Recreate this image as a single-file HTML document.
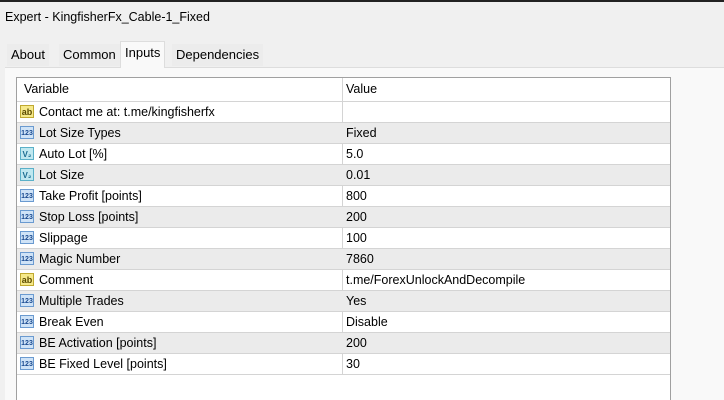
<!DOCTYPE html><html style="overflow:hidden"><head><style>
html,body{overflow:hidden}
body{margin:0;width:724px;height:400px;background:#f0f0f0;font-family:"Liberation Sans",sans-serif;font-size:12px;color:#000;position:relative}
.top{position:absolute;left:0;top:0;width:724px;height:2px;background:#222}
.title{position:absolute;left:5px;top:10px;font-size:12.5px}
.tabs{position:absolute;top:44px;left:5px;height:24px}
.tab{position:absolute;top:0;height:22px;line-height:22px;font-size:13px;background:#ececec;padding:0 4px}
.tab.sel{top:-3px;height:26px;line-height:22px;background:#f9f9f9;border:1px solid #ddd;border-bottom:none}
.panel{position:absolute;left:5px;top:67px;width:719px;height:333px;background:#f9f9f9;border-top:1px solid #ddd}
.tbl{position:absolute;left:16px;top:77px;width:653px;height:330px;background:#fff;border:1px solid #a0a0a0}
.row{position:absolute;left:0;width:653px;height:20px;border-bottom:1px solid #d4d4d4;line-height:20px;font-size:12.5px}
.row.g{background:#ebebeb}
.c1{position:absolute;left:22px}
.c2{position:absolute;left:329px}
.div{position:absolute;left:325px;top:0;width:1px;height:297px;background:#d4d4d4}
.ic{position:absolute;left:3px;top:3px;width:14px;height:13px;border:1px solid #6a9ad0;background:#cfe3f7;font-size:7px;line-height:13px;text-align:center;color:#1a4a90;font-weight:bold;box-sizing:border-box}
.ic.ab{background:#f6e98a;border-color:#c0a930;color:#5a4a00;font-size:9px}
.ic.v{background:#bfe8f0;border-color:#5ab0c8;color:#1a6a90;font-size:8px}
</style></head><body>
<div class="top"></div>
<div class="title">Expert - KingfisherFx_Cable-1_Fixed</div>
<div class="panel"></div>
<div class="tabs">
<div class="tab" style="left:2px">About</div>
<div class="tab" style="left:54px">Common</div>
<div class="tab sel" style="left:115px">Inputs</div>
<div class="tab" style="left:167px">Dependencies</div>
</div>
<div class="tbl">
<div class="div"></div>
<div class="row" style="top:0;height:23px;line-height:23px"><span class="c1" style="left:7px">Variable</span><span class="c2">Value</span></div>
<div class="row" style="top:24px"><span class="ic ab">ab</span><span class="c1">Contact me at: t.me/kingfisherfx</span></div>
<div class="row g" style="top:45px"><span class="ic">123</span><span class="c1">Lot Size Types</span><span class="c2">Fixed</span></div>
<div class="row" style="top:66px"><span class="ic v">V₂</span><span class="c1">Auto Lot [%]</span><span class="c2">5.0</span></div>
<div class="row g" style="top:87px"><span class="ic v">V₂</span><span class="c1">Lot Size</span><span class="c2">0.01</span></div>
<div class="row" style="top:108px"><span class="ic">123</span><span class="c1">Take Profit [points]</span><span class="c2">800</span></div>
<div class="row g" style="top:129px"><span class="ic">123</span><span class="c1">Stop Loss [points]</span><span class="c2">200</span></div>
<div class="row" style="top:150px"><span class="ic">123</span><span class="c1">Slippage</span><span class="c2">100</span></div>
<div class="row g" style="top:171px"><span class="ic">123</span><span class="c1">Magic Number</span><span class="c2">7860</span></div>
<div class="row" style="top:192px"><span class="ic ab">ab</span><span class="c1">Comment</span><span class="c2">t.me/ForexUnlockAndDecompile</span></div>
<div class="row g" style="top:213px"><span class="ic">123</span><span class="c1">Multiple Trades</span><span class="c2">Yes</span></div>
<div class="row" style="top:234px"><span class="ic">123</span><span class="c1">Break Even</span><span class="c2">Disable</span></div>
<div class="row g" style="top:255px"><span class="ic">123</span><span class="c1">BE Activation [points]</span><span class="c2">200</span></div>
<div class="row" style="top:276px"><span class="ic">123</span><span class="c1">BE Fixed Level [points]</span><span class="c2">30</span></div>
</div>
</body></html>
